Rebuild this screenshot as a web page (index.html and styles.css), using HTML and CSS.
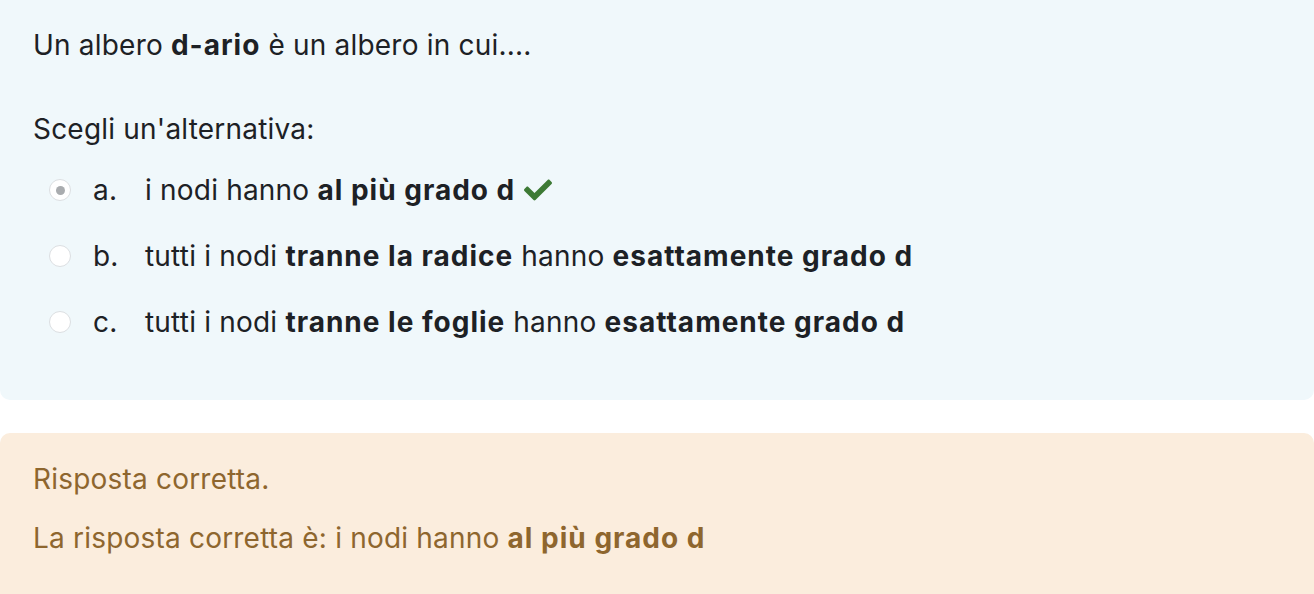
FILE: index.html
```html
<!DOCTYPE html>
<html lang="it">
<head>
<meta charset="utf-8">
<link rel="stylesheet" href="styles.css">
</head>
<body>
<div class="formulation">
  <p class="qtext">Un albero <b>d-ario</b> è un albero in cui....</p>
  <p class="prompt">Scegli un'alternativa:</p>
  <div class="answers">
    <div class="option">
      <span class="radio checked"></span>
      <span class="letter">a.</span>
      <span class="text">i nodi hanno <b>al più grado d</b></span>
      <svg class="check" viewBox="0 0 512 512" width="28" height="28"><path fill="#3d7a35" d="M173.9 439.4L7.5 273c-10-10-10-26.2 0-36.2l36.2-36.2c10-10 26.2-10 36.2 0L192 312.7 432.1 72.6c10-10 26.2-10 36.2 0l36.2 36.2c10 10 10 26.2 0 36.2L210.1 439.4c-10 10-26.2 10-36.2 0z"/></svg>
    </div>
    <div class="option">
      <span class="radio"></span>
      <span class="letter">b.</span>
      <span class="text">tutti i nodi <b>tranne la radice</b> hanno <b>esattamente grado d</b></span>
    </div>
    <div class="option">
      <span class="radio"></span>
      <span class="letter">c.</span>
      <span class="text">tutti i nodi <b>tranne le foglie</b> hanno <b>esattamente grado d</b></span>
    </div>
  </div>
</div>
<div class="outcome">
  <p class="feedback">Risposta corretta.</p>
  <p class="rightanswer">La risposta corretta è: i nodi hanno <b>al più grado d</b></p>
</div>
</body>
</html>
```
FILE: styles.css
```css
html, body {
  margin: 0;
  padding: 0;
  background: #ffffff;
}
body {
  font-family: Inter, "Noto Sans", sans-serif;
  font-size: 28px;
  line-height: 42px;
  letter-spacing: 0.2px;
  color: #1d2125;
}
b { font-weight: 700; letter-spacing: 1px; }
p { margin: 0; }

.formulation {
  background: #f0f8fb;
  border-radius: 0 0 10px 10px;
  padding: 24px 33px 0;
  height: 376px;
}
.prompt { margin-top: 42px; }
.answers {
  margin-top: 19px;
  padding-left: 16px;
  display: flex;
  flex-direction: column;
  gap: 24px;
}
.option {
  display: flex;
  align-items: center;
  height: 42px;
}
.radio {
  width: 22px;
  height: 22px;
  border-radius: 50%;
  border: 1px solid #dcdfe2;
  background: #ffffff;
  box-sizing: border-box;
  display: flex;
  align-items: center;
  justify-content: center;
  flex: none;
}
.radio.checked::after {
  content: "";
  width: 9px;
  height: 9px;
  border-radius: 50%;
  background: #a9acaf;
}
.letter {
  margin-left: 22px;
  width: 52px;
  flex: none;
}
.check {
  margin-left: 9px;
}

.outcome {
  margin-top: 33px;
  background: #fbeddd;
  border-radius: 10px 10px 0 0;
  padding: 25px 33px 0;
  height: 136px;
  color: #8e662e;
}
.rightanswer { margin-top: 17px; }
```
